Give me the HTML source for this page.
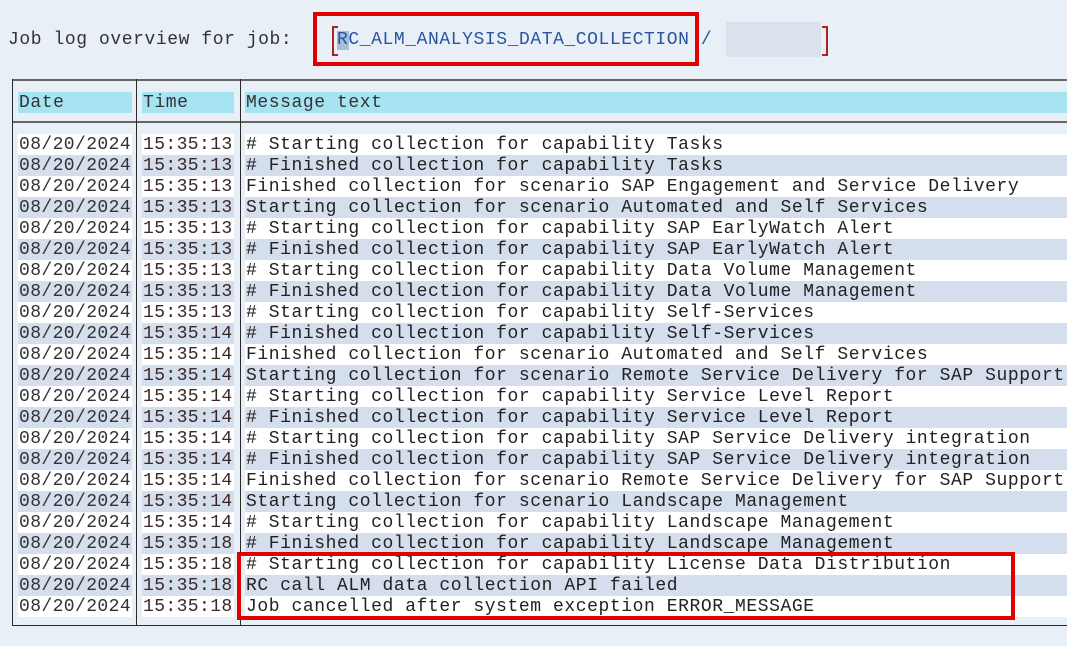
<!DOCTYPE html>
<html><head><meta charset="utf-8"><style>
body{margin:0;width:1067px;height:646px;background:#e9eff7;position:relative;overflow:hidden;font-family:"Liberation Mono",monospace;font-size:18px;letter-spacing:0.57px}
.a{position:absolute;white-space:pre;line-height:21px}
.hl{position:absolute;background:#2a2a2a}
.r{position:absolute;height:21px}
</style></head><body>
<div class="a" style="left:8px;top:30px;color:#333">Job log overview for job:</div>
<div style="position:absolute;left:337px;top:31px;width:12px;height:19px;background:#a9bdd8"></div>
<div class="a" style="left:337px;top:30px;color:#2855a0">RC_ALM_ANALYSIS_DATA_COLLECTION /</div>
<div style="position:absolute;left:726px;top:22px;width:95px;height:35px;background:#dae2ec"></div>
<div style="position:absolute;left:332px;top:26px;width:4px;height:26px;border:2px solid #b02020;border-right:none"></div>
<div style="position:absolute;left:822px;top:26px;width:4px;height:26px;border:2px solid #b02020;border-left:none"></div>
<div style="position:absolute;left:313px;top:12px;width:378px;height:46px;border:4px solid #e00000"></div>
<div class="hl" style="left:12px;top:79px;width:1055px;height:2px;background:#666"></div>
<div class="hl" style="left:12px;top:121px;width:1055px;height:2px;background:#666"></div>
<div class="hl" style="left:12px;top:625px;width:1055px;height:1px"></div>
<div class="hl" style="left:12px;top:79px;width:1px;height:547px"></div>
<div class="hl" style="left:136px;top:79px;width:1px;height:547px"></div>
<div class="hl" style="left:240px;top:79px;width:1px;height:547px"></div>
<div class="r" style="left:18px;top:92px;width:114px;background:#a6e4f2"></div>
<div class="r" style="left:142px;top:92px;width:92px;background:#a6e4f2"></div>
<div class="r" style="left:245px;top:92px;width:822px;background:#a6e4f2"></div>
<div class="a" style="left:19px;top:93px;color:#333">Date</div>
<div class="a" style="left:143px;top:93px;color:#333">Time</div>
<div class="a" style="left:246px;top:93px;color:#333">Message text</div>
<div id="rows"></div>
<script>
var m=["# Starting collection for capability Tasks","# Finished collection for capability Tasks","Finished collection for scenario SAP Engagement and Service Delivery","Starting collection for scenario Automated and Self Services","# Starting collection for capability SAP EarlyWatch Alert","# Finished collection for capability SAP EarlyWatch Alert","# Starting collection for capability Data Volume Management","# Finished collection for capability Data Volume Management","# Starting collection for capability Self-Services","# Finished collection for capability Self-Services","Finished collection for scenario Automated and Self Services","Starting collection for scenario Remote Service Delivery for SAP Support","# Starting collection for capability Service Level Report","# Finished collection for capability Service Level Report","# Starting collection for capability SAP Service Delivery integration","# Finished collection for capability SAP Service Delivery integration","Finished collection for scenario Remote Service Delivery for SAP Support","Starting collection for scenario Landscape Management","# Starting collection for capability Landscape Management","# Finished collection for capability Landscape Management","# Starting collection for capability License Data Distribution","RC call ALM data collection API failed","Job cancelled after system exception ERROR_MESSAGE"];
var t=["13","13","13","13","13","13","13","13","13","14","14","14","14","14","14","14","14","14","14","18","18","18","18"];
var h="";
for(var i=0;i<m.length;i++){var y=134+i*21,bg=i%2?"#d4deec":"#fff";
h+='<div class="r" style="left:18px;top:'+y+'px;width:114px;background:'+bg+'"></div>'+
'<div class="r" style="left:142px;top:'+y+'px;width:92px;background:'+bg+'"></div>'+
'<div class="r" style="left:245px;top:'+y+'px;width:822px;background:'+bg+'"></div>'+
'<div class="a" style="left:19px;top:'+(y+1)+'px;color:#333;letter-spacing:0.4px">08/20/2024</div>'+
'<div class="a" style="left:143px;top:'+(y+1)+'px;color:#3b2828;letter-spacing:0.4px">15:35:'+t[i]+'</div>'+
'<div class="a" style="left:246px;top:'+(y+1)+'px;color:#222">'+m[i]+'</div>';}
document.getElementById("rows").innerHTML=h;
</script>
<div style="position:absolute;left:237px;top:552px;width:770px;height:60px;border:4px solid #e00000"></div>
</body></html>
